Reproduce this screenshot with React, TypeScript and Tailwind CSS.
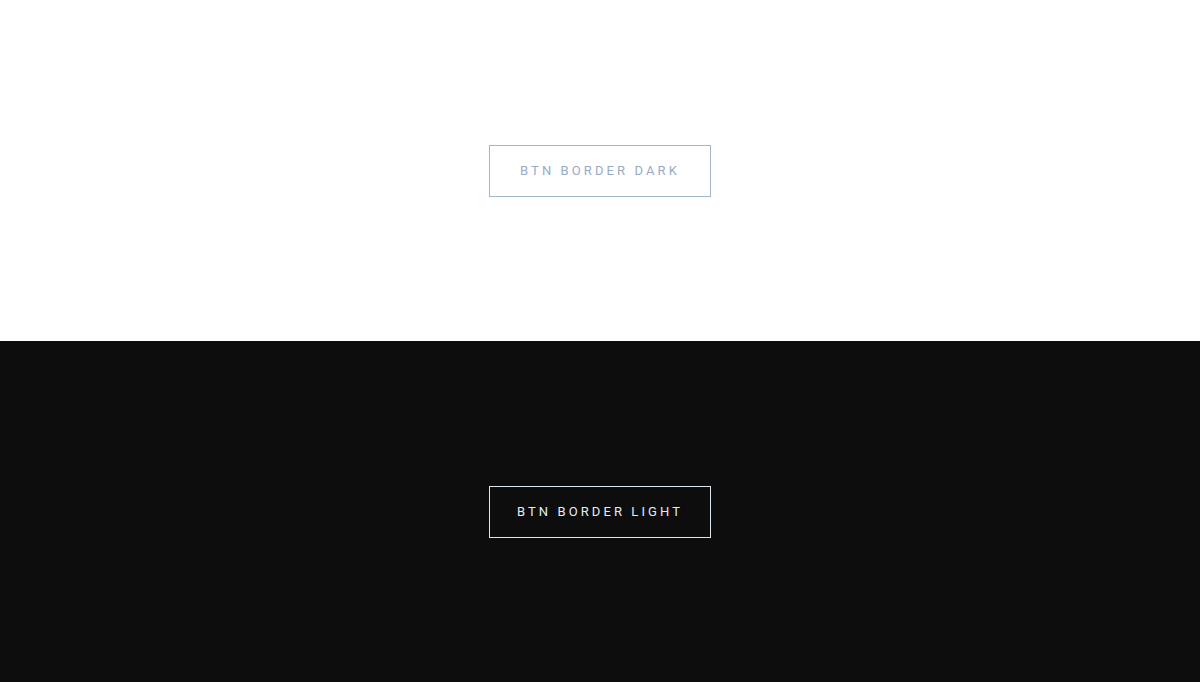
const Button = ({label, tone}: {label: string; tone: "dark" | "light"}) => (
  <button
    className={`h-[52px] w-[222px] border text-[13px] font-normal uppercase tracking-[3.1px] ${
      tone === "dark"
        ? "border-[#a2b5cd] text-[#97abc5]"
        : "border-[#dbe6f1] text-[#e4ecf5]"
    }`}
    style={{fontFamily: "Roboto, 'Liberation Sans', sans-serif"}}
  >
    {label}
  </button>
);

export default function App() {
  return (
    <div className="flex h-[682px] w-full flex-col">
      <section className="flex h-[341px] items-center justify-center bg-white">
        <Button label="Btn Border Dark" tone="dark" />
      </section>
      <section className="flex h-[341px] items-center justify-center bg-[#0d0d0d]">
        <Button label="Btn Border Light" tone="light" />
      </section>
    </div>
  );
}
